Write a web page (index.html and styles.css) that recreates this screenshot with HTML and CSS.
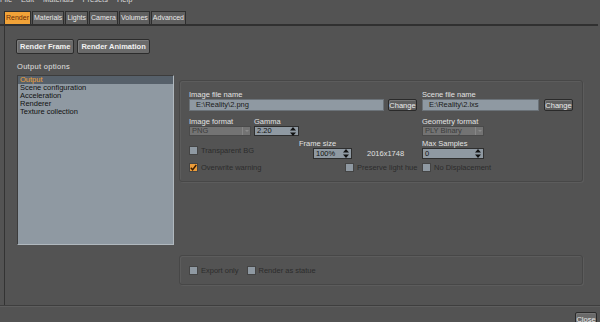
FILE: index.html
```html
<!DOCTYPE html>
<html lang="en">

<head>
    <meta charset="UTF-8">
    <title>Reality - Render</title>
    <link rel="stylesheet" href="styles.css">
</head>

<body>
    <div class="menubar">
        <span>File</span>
        <span>Edit</span>
        <span>Materials</span>
        <span>Presets</span>
        <span>Help</span>
    </div>

    <div class="tabs">
        <span class="tab tab-active">Render</span>
        <span class="tab">Materials</span>
        <span class="tab">Lights</span>
        <span class="tab">Camera</span>
        <span class="tab">Volumes</span>
        <span class="tab">Advanced</span>
    </div>

    <div class="page">
        <div class="actions">
            <button class="btn-big">Render Frame</button>
            <button class="btn-big">Render Animation</button>
        </div>

        <div class="main">
            <div class="side">
                <div class="side-title">Output options</div>
                <ul class="list">
                    <li class="list-sel">Output</li>
                    <li>Scene configuration</li>
                    <li>Acceleration</li>
                    <li>Renderer</li>
                    <li>Texture collection</li>
                </ul>
            </div>

            <div class="content">
                <div class="group group-main">
                    <!-- file names -->
                    <div class="row">
                        <div class="left">
                            <div class="label">Image file name</div>
                            <div class="file">
                                <div class="input input-file">E:\Reality\2.png</div>
                                <button class="btn">Change</button>
                            </div>
                        </div>
                        <div class="right">
                            <div class="label">Scene file name</div>
                            <div class="file">
                                <div class="input input-file">E:\Reality\2.lxs</div>
                                <button class="btn">Change</button>
                            </div>
                        </div>
                    </div>

                    <!-- formats -->
                    <div class="row row-2">
                        <div class="left">
                            <div class="field">
                                <div class="label">Image format</div>
                                <div class="combo">PNG<span class="combo-arrow"></span></div>
                            </div>
                            <div class="field field-gamma">
                                <div class="label">Gamma</div>
                                <div class="spin spin-gamma">2.20
                                    <svg class="spin-arrows" width="6" height="9" viewBox="0 0 6 9"><path d="M3 0L6 3.5H0Z M3 9L6 5.5H0Z" fill="#111"/></svg>
                                </div>
                            </div>
                        </div>
                        <div class="right">
                            <div class="label">Geometry format</div>
                            <div class="combo">PLY Binary<span class="combo-arrow"></span></div>
                        </div>
                    </div>

                    <!-- sizes -->
                    <div class="row row-3">
                        <div class="left">
                            <label class="check check-tbg"><span class="box"></span>Transparent BG</label>
                            <div class="frame-size">
                                <div class="label">Frame size</div>
                                <div class="frame-line">
                                    <div class="spin spin-frame">100%
                                        <svg class="spin-arrows" width="6" height="9" viewBox="0 0 6 9"><path d="M3 0L6 3.5H0Z M3 9L6 5.5H0Z" fill="#111"/></svg>
                                    </div>
                                    <span class="dims">2016x1748</span>
                                </div>
                            </div>
                        </div>
                        <div class="right">
                            <div class="label">Max Samples</div>
                            <div class="spin spin-samples">0
                                <svg class="spin-arrows" width="6" height="9" viewBox="0 0 6 9"><path d="M3 0L6 3.5H0Z M3 9L6 5.5H0Z" fill="#111"/></svg>
                            </div>
                        </div>
                    </div>

                    <!-- flags -->
                    <div class="row row-4">
                        <div class="left">
                            <label class="check check-overwrite"><span class="box box-on">
                                <svg width="7" height="7" viewBox="0 0 7 7"><path d="M0.8 3.8L2.6 5.8L6.3 1" fill="none" stroke="#3a1c00" stroke-width="1.4"/></svg>
                            </span>Overwrite warning</label>
                            <label class="check"><span class="box"></span>Preserve light hue</label>
                        </div>
                        <div class="right">
                            <label class="check"><span class="box"></span>No Displacement</label>
                        </div>
                    </div>
                </div>

                <div class="group group-extra">
                    <label class="check check-export"><span class="box"></span>Export only</label>
                    <label class="check"><span class="box"></span>Render as statue</label>
                </div>
            </div>
        </div>
    </div>

    <div class="footer">
        <button class="btn btn-close">Close</button>
    </div>
</body>

</html>
```

FILE: styles.css
```css
* {
    box-sizing: border-box;
    margin: 0;
    padding: 0;
}

body {
    width: 600px;
    height: 322px;
    overflow: hidden;
    background: #535353;
    font-family: "Liberation Sans", Arial, sans-serif;
    font-size: 7.5px;
    color: #e4e4e4;
}

button {
    font-family: inherit;
    font-size: inherit;
    cursor: pointer;
}

/* menu bar, cut off at the top of the window */
.menubar {
    height: 5px;
    overflow: hidden;
    display: flex;
    gap: 9px;
}

.menubar span {
    margin-top: -5px;
    line-height: 9px;
    color: #d8d8d8;
}

/* tabs */
.tabs {
    margin-top: 6px;
    padding-left: 4px;
    display: flex;
    gap: 1px;
    border-bottom: 2px solid #303030;
    margin-right: 2px;
}

.tab {
    height: 13px;
    line-height: 11px;
    padding: 0 1px;
    background: #5f5f5f;
    border: 1px solid #2e2e2e;
    border-bottom: none;
    color: #e8e8e8;
    font-size: 7px;
}

.tab-active {
    background: #f2a338;
    color: #6a2c08;
}

/* page body */
.page {
    height: 279px;
    margin-left: 4px;
    border-left: 1px solid #333;
    padding-left: 11px;
}

.actions {
    padding-top: 13px;
    display: flex;
    gap: 3px;
}

.btn-big {
    height: 15px;
    padding: 0 3px;
    background: #6a6a6a;
    border: 1px solid #2c2c2c;
    border-radius: 2px;
    box-shadow: inset 1px 1px 0 #7e7e7e;
    color: #f2f2f2;
    font-weight: bold;
}

.main {
    display: flex;
    gap: 5px;
    margin-top: 8px;
}

.side {
    width: 157px;
    margin-left: 1px;
}

.side-title {
    line-height: 9px;
    color: #e0e0e0;
    letter-spacing: 0.3px;
}

.list {
    list-style: none;
    margin-top: 4px;
    height: 170px;
    background: #8f99a2;
    border: 1px solid #3c3c3c;
    border-bottom-color: #b0b8be;
    border-right-color: #b0b8be;
    color: #111;
}

.list li {
    line-height: 8px;
    padding-left: 2px;
}

.list .list-sel {
    background: #56606a;
    color: #f0a238;
}

.content {
    width: 404px;
    padding-top: 18px;
}

.group {
    border: 1px solid #474747;
    border-radius: 3px;
    box-shadow: inset 1px 1px 0 #5c5c5c, 1px 1px 0 #5c5c5c;
    padding: 10px 9px 0;
}

.group-main {
    height: 102px;
}

.group-extra {
    margin-top: 73px;
    height: 30px;
    display: flex;
}

.row {
    display: flex;
}

.left {
    width: 233px;
    display: flex;
}

.row:first-child .left {
    display: block;
    width: 228px;
    margin-right: 5px;
}

.right {
    flex: 1;
}

.label {
    line-height: 8px;
    color: #e2e2e2;
}

.file {
    display: flex;
    gap: 4px;
}

.right .file {
    gap: 5px;
}

.input {
    height: 12px;
    background: #8f99a2;
    border: 1px solid #6b7278;
    color: #1a1a1a;
}

.input-file {
    flex: 1;
    line-height: 10px;
    padding-left: 6px;
}

.btn {
    width: 29px;
    height: 12px;
    background: #5e5e5e;
    border: 1px solid #2a2a2a;
    border-radius: 2px;
    box-shadow: inset 1px 1px 0 #777;
    color: #ececec;
    line-height: 9px;
}

.row-2 {
    margin-top: 7px;
}

.field-gamma {
    margin-left: 3px;
}

.combo {
    position: relative;
    width: 62px;
    height: 10px;
    line-height: 8px;
    padding-left: 2px;
    background: #737373;
    border: 1px solid #4a4a4a;
    color: #3c3c3c;
}

.combo-arrow {
    position: absolute;
    right: 0;
    top: 0;
    width: 8px;
    height: 8px;
    border-left: 1px solid #878787;
}

.combo-arrow::after {
    content: "";
    position: absolute;
    left: 2px;
    top: 3px;
    border-left: 2px solid transparent;
    border-right: 2px solid transparent;
    border-top: 2px solid #8c8c8c;
}

.spin {
    position: relative;
    height: 10px;
    line-height: 8px;
    padding-left: 2px;
    background: #8f99a2;
    border: 1px solid #2e2e2e;
    color: #111;
}

.spin-arrows {
    position: absolute;
    right: 2px;
    top: 0;
}

.spin-gamma {
    width: 45px;
}

.spin-frame {
    width: 39px;
    height: 11px;
    line-height: 9px;
}

.spin-samples {
    width: 62px;
    height: 11px;
    line-height: 9px;
}

.row-3 {
    margin-top: 4px;
}

.check {
    display: flex;
    align-items: center;
    height: 9px;
    line-height: 9px;
    color: #2c2c2c;
}

.box {
    width: 9px;
    height: 9px;
    margin-right: 3px;
    background: #8f99a2;
    border: 1px solid #444;
    display: flex;
    align-items: center;
    justify-content: center;
}

.box-on {
    background: #ed9d3a;
}

.check-tbg {
    width: 110px;
    margin-top: 6px;
}

.frame-line {
    display: flex;
    align-items: center;
    margin-left: 14px;
}

.dims {
    margin-left: 15px;
    color: #e0e0e0;
}

.row-4 {
    margin-top: 4px;
}

.check-overwrite {
    width: 156px;
}

.check-export {
    margin-right: 8px;
}

.footer {
    border-top: 1px solid #3e3e3e;
    box-shadow: inset 0 1px 0 #5e5e5e;
    display: flex;
    justify-content: flex-end;
    padding: 6px 3px 0 0;
}

.btn-close {
    width: 22px;
    height: 14px;
    background: #6a6a6a;
    line-height: 11px;
}
```
